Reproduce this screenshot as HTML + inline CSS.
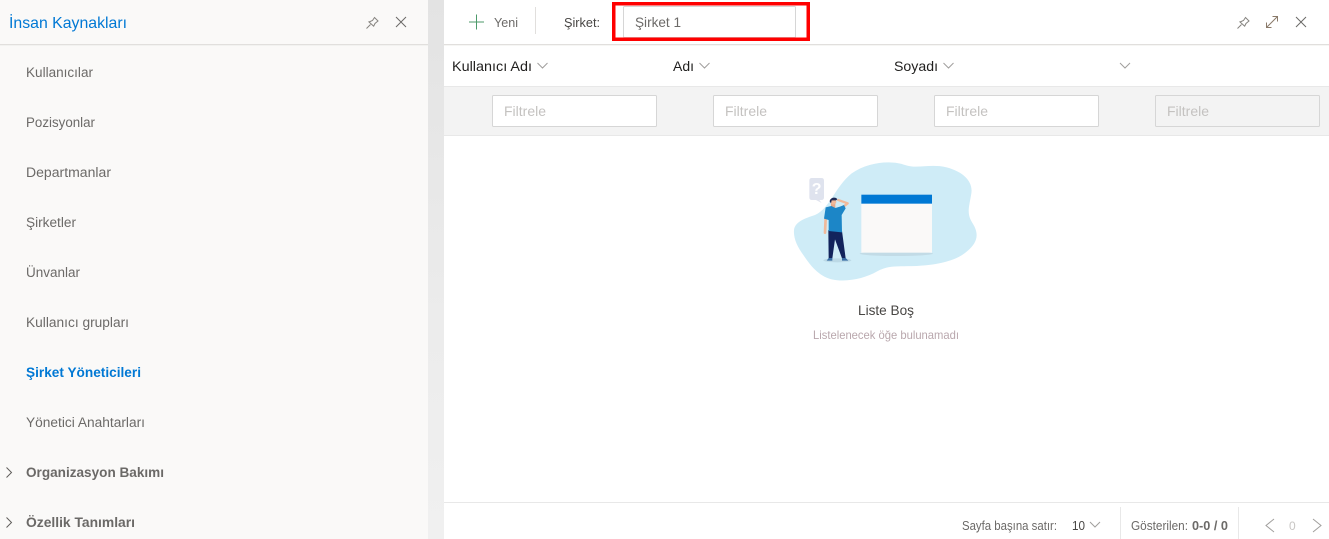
<!DOCTYPE html>
<html lang="tr"><head><meta charset="utf-8"><title>İnsan Kaynakları</title>
<style>
html,body{margin:0;padding:0;background:#fff;width:1329px;height:539px;overflow:hidden}
svg{display:block}
text{font-family:"Liberation Sans",sans-serif;font-size:13.5px;fill:#6c6a68}
.b{font-weight:700}
.f{fill:#c4c2c0;font-size:14px}
</style></head><body>
<svg width="1329" height="539" viewBox="0 0 1329 539" xmlns="http://www.w3.org/2000/svg">
<defs>
<linearGradient id="g" x1="0" y1="0" x2="0" y2="1"><stop offset="0" stop-color="#e3e3e3"/><stop offset=".6" stop-color="#ececec"/><stop offset="1" stop-color="#f0f0f0"/></linearGradient>
<g id="pin" fill="none" stroke="#85837f" stroke-width="1"><path d="M0.500 12.500L4.500 8.500M2.500 5.500L8 10.500M3 6L6.500 4.500L8.500 1.500L12 5L9 7.500L7.500 10.500"/></g>
<path id="x" d="M0 0L10 10M10 0L0 10" fill="none" stroke="#6b6967" stroke-width="1"/>
</defs>
<!-- sidebar -->
<rect x="0" y="0" width="428" height="539" fill="#faf9f8"/>
<rect x="428" y="0" width="16" height="539" fill="url(#g)"/>
<rect x="0" y="44" width="428" height="1.3" fill="#e1dfdd"/>
<text x="9" y="28" style="font-size:16px;fill:#0078d4" textLength="118" lengthAdjust="spacingAndGlyphs">İnsan Kaynakları</text>
<use href="#pin" x="366" y="16"/>
<use href="#x" x="396" y="17"/>
<text x="26" y="77" textLength="67" lengthAdjust="spacingAndGlyphs">Kullanıcılar</text>
<text x="26" y="127" textLength="69" lengthAdjust="spacingAndGlyphs">Pozisyonlar</text>
<text x="26" y="177" textLength="85" lengthAdjust="spacingAndGlyphs">Departmanlar</text>
<text x="26" y="227" textLength="50" lengthAdjust="spacingAndGlyphs">Şirketler</text>
<text x="26" y="277" textLength="54" lengthAdjust="spacingAndGlyphs">Ünvanlar</text>
<text x="26" y="327" textLength="103" lengthAdjust="spacingAndGlyphs">Kullanıcı grupları</text>
<text x="26" y="377" class="b" style="fill:#0078d4" textLength="115" lengthAdjust="spacingAndGlyphs">Şirket Yöneticileri</text>
<text x="26" y="427" textLength="119" lengthAdjust="spacingAndGlyphs">Yönetici Anahtarları</text>
<text x="26" y="477" class="b" style="fill:#6b6967" textLength="138" lengthAdjust="spacingAndGlyphs">Organizasyon Bakımı</text>
<text x="26" y="527" class="b" style="fill:#6b6967" textLength="109" lengthAdjust="spacingAndGlyphs">Özellik Tanımları</text>
<path d="M6.500 467.500L11.500 472.500L6.500 477.500M6.500 517.500L11.500 522.500L6.500 527.500" fill="none" stroke="#605e5c" stroke-width="1"/>
<!-- toolbar -->
<rect x="444" y="44" width="885" height="1.3" fill="#e1dfdd"/>
<path d="M469 22H484M476.500 14.500V29.500" stroke="#4c9a6a" stroke-width="1" fill="none"/>
<text x="494" y="27" style="font-size:13px" textLength="24" lengthAdjust="spacingAndGlyphs">Yeni</text>
<rect x="535" y="7" width="1" height="27" fill="#e1dfdd"/>
<text x="564" y="27" style="font-size:13px;fill:#484644" textLength="36" lengthAdjust="spacingAndGlyphs">Şirket:</text>
<rect x="623.500" y="6.500" width="172" height="31" rx="1" fill="#fff" stroke="#d6d6d6"/>
<text x="635" y="27" style="font-size:14px" textLength="46" lengthAdjust="spacingAndGlyphs">Şirket 1</text>
<rect x="613.750" y="3.750" width="194.500" height="35.500" fill="none" stroke="#f00" stroke-width="3.500"/>
<use href="#pin" x="1237" y="16"/>
<path d="M1266.500 27.500L1277.500 16.500M1272.500 16.500H1277.500V21.500M1266.500 22.500V27.500H1271.500" fill="none" stroke="#8a7a6a" stroke-width="1"/>
<use href="#x" x="1296" y="17"/>
<!-- columns -->
<text x="452" y="71" style="font-size:14px;fill:#201f1e" textLength="80" lengthAdjust="spacingAndGlyphs">Kullanıcı Adı</text>
<text x="673" y="71" style="font-size:14px;fill:#201f1e" textLength="21" lengthAdjust="spacingAndGlyphs">Adı</text>
<text x="894" y="71" style="font-size:14px;fill:#201f1e" textLength="44" lengthAdjust="spacingAndGlyphs">Soyadı</text>
<path d="M537.500 63L542.500 68L547.500 63M699.500 63L704.500 68L709.500 63M943.500 63L948.500 68L953.500 63M1120 63L1125 68L1130 63" fill="none" stroke="#a19f9d" stroke-width="1"/>
<rect x="444" y="86" width="885" height="50" fill="#f3f3f3"/>
<rect x="444" y="86" width="885" height="1" fill="#e8e8e8"/>
<rect x="444" y="135" width="885" height="1" fill="#e8e8e8"/>
<rect x="492.500" y="95.500" width="164" height="31" rx="1" fill="#fff" stroke="#d6d6d6"/>
<rect x="713.500" y="95.500" width="164" height="31" rx="1" fill="#fff" stroke="#d6d6d6"/>
<rect x="934.500" y="95.500" width="164" height="31" rx="1" fill="#fff" stroke="#d6d6d6"/>
<rect x="1155.500" y="95.500" width="164" height="31" rx="1" fill="#f3f3f3" stroke="#d6d6d6"/>
<text x="504" y="116" class="f" textLength="42" lengthAdjust="spacingAndGlyphs">Filtrele</text>
<text x="725" y="116" class="f" textLength="42" lengthAdjust="spacingAndGlyphs">Filtrele</text>
<text x="946" y="116" class="f" textLength="42" lengthAdjust="spacingAndGlyphs">Filtrele</text>
<text x="1167" y="116" class="f" textLength="42" lengthAdjust="spacingAndGlyphs">Filtrele</text>
<!-- illustration (coordinates at 3x) -->
<g transform="translate(780 150) scale(.33333)">
<path d="M42 240C45 215 75 205 105 195C150 175 165 110 215 70C265 35 335 30 375 45C410 58 450 40 500 52C550 65 580 95 574 130C568 170 558 190 578 220C600 255 590 280 560 305C525 335 465 345 410 348C350 350 325 345 290 365C255 385 200 398 155 388C115 378 90 345 70 315C52 290 40 265 42 240Z" fill="#cfecf7"/>
<ellipse cx="349" cy="311" rx="110" ry="7" fill="#c2dbe6"/>
<rect x="244" y="134" width="212" height="174" fill="#faf9f8"/>
<rect x="244" y="134" width="212" height="27" fill="#0078d4"/>
<path d="M96 84H124Q132 84 132 92V142Q132 150 124 150H118L125 159L108 150H96Q88 150 88 142V92Q88 84 96 84Z" fill="#dfe3ee"/>
<text x="110" y="132" text-anchor="middle" style="font-size:48px;font-weight:700;fill:#fff">?</text>
<ellipse cx="172" cy="331" rx="42" ry="6" fill="#bcd9e6"/>
<path d="M145 240L146 325H157L165 268L186 325H197L186 243Z" fill="#12235c"/>
<path d="M146 324L140 332H157L157 324ZM186 324L186 332H205L197 324Z" fill="#3a6ea5"/>
<path d="M137 205L135 248" stroke="#f0b99a" stroke-width="8" stroke-linecap="round" fill="none"/>
<path d="M188 172L203 160L172 149" stroke="#f0b99a" stroke-width="7" stroke-linejoin="round" fill="none"/>
<rect x="153" y="160" width="13" height="14" fill="#e8a98a"/>
<circle cx="160" cy="155" r="9" fill="#f0b99a"/>
<path d="M149 154C150 142 168 139 172 148L168 151L155 151L153 160Z" fill="#1e2a55"/>
<path d="M137 172L154 168L166 174L180 170L192 165L197 175L185 195L186 247L146 243L146 210L132 206Z" fill="#1c86c7"/>
</g>
<text x="886" y="315" text-anchor="middle" style="font-size:14px;fill:#484644" textLength="56" lengthAdjust="spacingAndGlyphs">Liste Boş</text>
<text x="886" y="339" text-anchor="middle" style="font-size:12px;fill:#b9a7ad" textLength="146" lengthAdjust="spacingAndGlyphs">Listelenecek öğe bulunamadı</text>
<!-- footer -->
<rect x="444" y="502" width="885" height="1" fill="#e8e8e8"/>
<rect x="1120" y="507" width="1" height="32" fill="#e8e8e8"/>
<rect x="1238" y="507" width="1" height="32" fill="#e8e8e8"/>
<text x="962" y="530" style="font-size:12.500px" textLength="95" lengthAdjust="spacingAndGlyphs">Sayfa başına satır:</text>
<text x="1072" y="530" style="font-size:12.500px;fill:#484644" textLength="13" lengthAdjust="spacingAndGlyphs">10</text>
<path d="M1090 522L1095 527L1100 522" fill="none" stroke="#a19f9d" stroke-width="1"/>
<text x="1131" y="530" style="font-size:12.500px" textLength="57" lengthAdjust="spacingAndGlyphs">Gösterilen:</text>
<text x="1192" y="530" class="b" style="font-size:12.500px" textLength="36" lengthAdjust="spacingAndGlyphs">0-0 / 0</text>
<text x="1289" y="530" style="font-size:12px;fill:#c8c6c4">0</text>
<path d="M1274 519L1266 525.500L1274 532M1313 519L1321 525.500L1313 532" fill="none" stroke="#a19f9d" stroke-width="1"/>
</svg>
</body></html>
